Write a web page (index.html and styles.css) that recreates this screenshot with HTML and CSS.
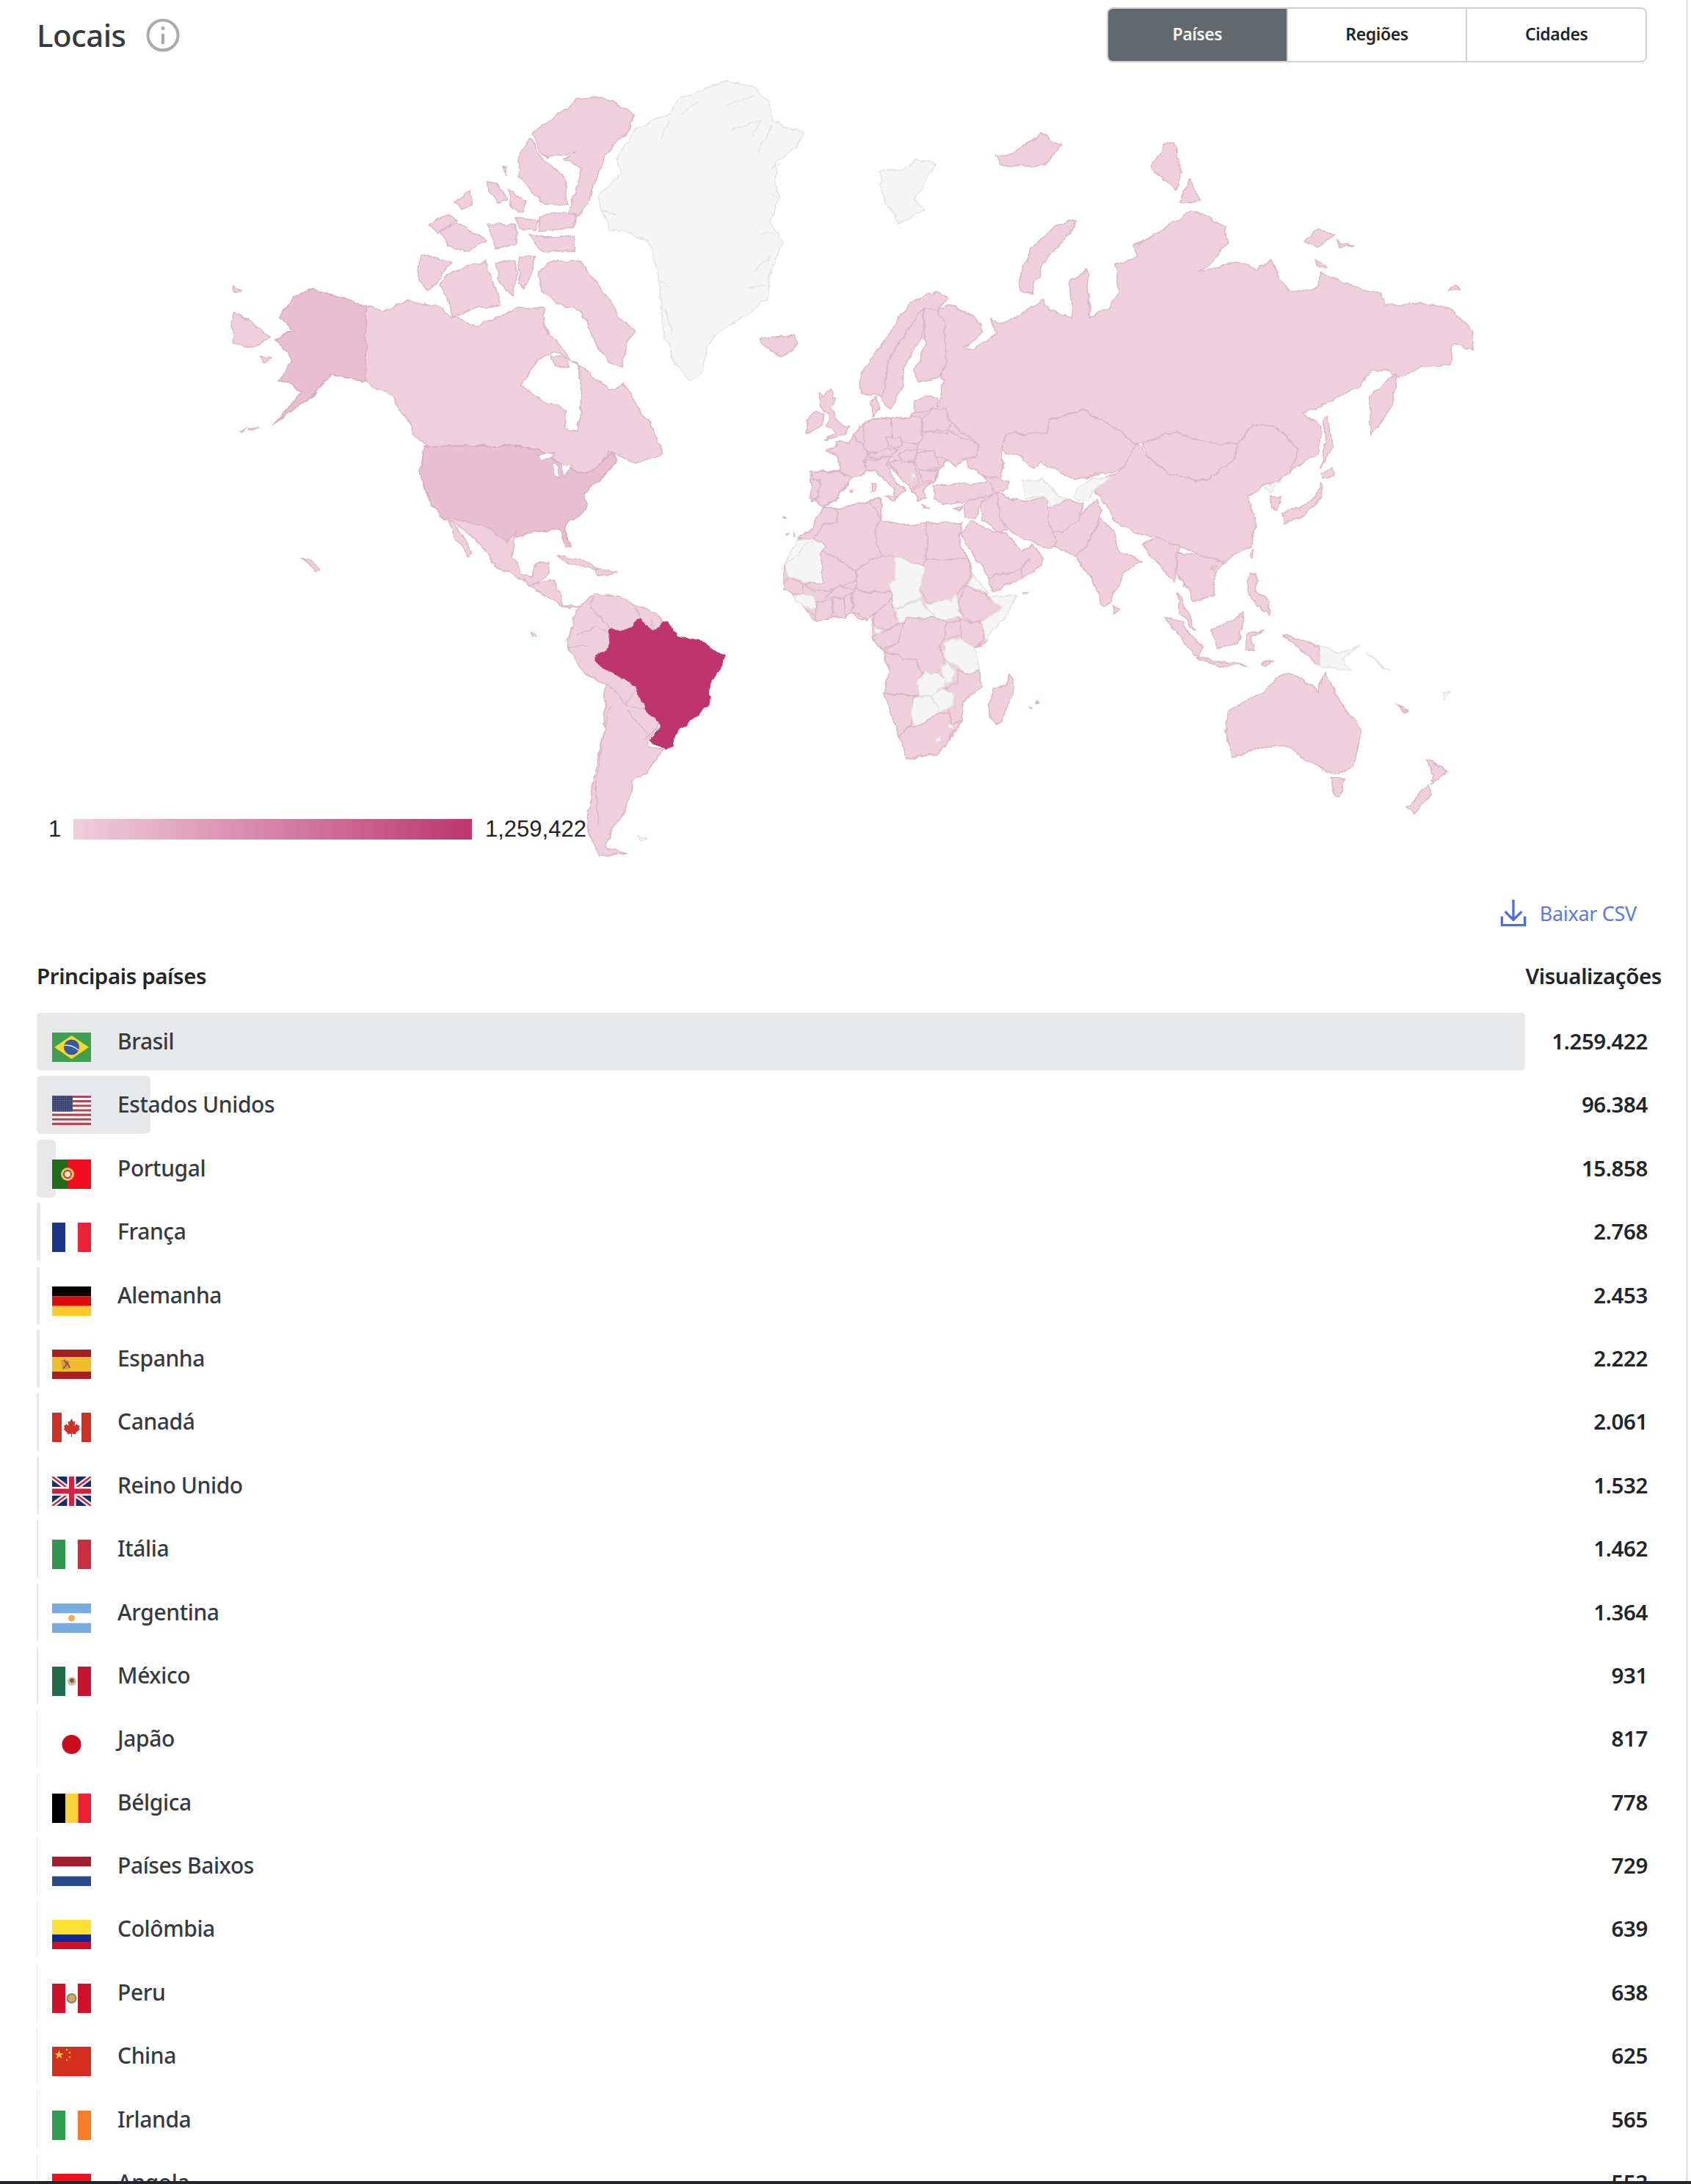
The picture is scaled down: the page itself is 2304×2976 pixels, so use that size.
FILE: index.html
```html
<!DOCTYPE html>
<html lang="pt-BR">
<head>
<meta charset="utf-8">
<title>Locais</title>
<link rel="stylesheet" href="styles.css">
</head>
<body>
<div class="screen">
<main class="page">
  <header class="head">
    <div class="title-group">
      <h1 class="title">Locais</h1>
      <svg class="info" viewBox="0 0 46 46"><circle cx="23" cy="23" r="20.5"/><path d="M23 21v14"/><circle class="dot" cx="23" cy="13.5" r="2.5"/></svg>
    </div>
    <div class="segments">
      <button class="seg seg-active">Países</button>
      <button class="seg">Regiões</button>
      <button class="seg">Cidades</button>
    </div>
  </header>

  <section class="map-wrap">
    <svg class="map" viewBox="50 100 2214 1100">
      <defs>
        <filter id="rough" x="0" y="0" width="100%" height="100%" filterUnits="objectBoundingBox" color-interpolation-filters="sRGB">
          <feTurbulence type="fractalNoise" baseFrequency=".06" numOctaves="3" seed="4" result="n"/>
          <feDisplacementMap in="SourceGraphic" in2="n" scale="9" xChannelSelector="R" yChannelSelector="G"/>
        </filter>
      </defs>
      <g filter="url(#rough)">
      <rect class="hit" x="50" y="100" width="2214" height="1100"/>
      <g transform="translate(280 90) scale(.574 .7015)">
        <path class="none" d="M1230 30L1300 40 1340 70 1345 105 1420 130 1400 160 1350 190 1360 250 1340 300 1370 345 1340 400 1335 450 1290 480 1210 520 1190 550 1175 600 1150 610 1115 580 1085 510 1080 450 1075 410 1050 340 1000 320 960 320 930 255 985 210 975 180 1020 120 1100 95 1130 60Z"/>
        <path class="fjord" d="M1250 125L1320 105 1300 135M1230 75L1300 60M1130 95L1170 70M1080 140L1100 105M975 290L940 280M1310 170L1345 115M1340 200L1365 190M1290 430L1330 425M1300 400L1340 370M1090 470L1110 520M1080 420L1100 430M1340 250L1365 255M1320 330L1360 320"/>
        <path class="land" d="M775 130L830 100 880 65 950 60 1020 95 1005 125 960 160 930 210 910 260 885 290 860 285 885 230 895 200 850 180 885 165 810 178 790 160Z"/>
        <path class="land" d="M740 180L770 140 800 180 850 215 860 270 800 265 745 215Z"/>
        <path class="land" d="M665 225L690 225 715 260 690 265ZM720 240L760 265 750 285 725 275ZM795 290L880 285 875 315 790 320ZM530 310L575 285 600 300 550 325ZM590 265L630 240 635 265 610 280ZM555 320L600 305 665 340 620 360 575 350ZM670 305L735 310 740 345 690 355ZM765 330L875 330 875 360 800 362ZM745 370L785 368 775 400 760 430 745 425ZM690 385L735 375 740 400 730 445 700 425ZM715 195L718 210 706 195ZM735 295L790 300 780 320 745 315Z"/>
        <path class="land" d="M510 365L585 380 550 420 525 435 503 410Z"/>
        <path class="land" d="M555 425L580 405 600 395 640 385 665 378 670 400 690 430 700 465 640 470 590 490 570 445Z"/>
        <path class="land" d="M790 400L815 378 890 380 920 410 950 440 985 490 1020 515 1000 545 990 585 960 575 925 540 905 495 890 475 860 470 840 460 800 440Z"/>
        <path class="land" d="M820 565L860 565 860 585 830 585ZM760 470L800 480 815 520 775 510Z"/>
        <path class="land" fill-rule="evenodd" d="M380 465L420 478 480 455 560 470 590 490 650 505 740 470 800 470 810 520 830 530 870 570 900 590 960 630 990 615 1040 680 1060 700 1085 755 1020 770 960 750 920 790 880 790 840 770 790 745 750 737 530 738 510 730 480 690 440 640 380 610ZM750 620L790 570 830 555 885 575 895 640 880 710 855 700 855 670 800 650Z"/>
        <path class="us" d="M380 465L320 450 255 432 205 450 175 490 210 515 165 530 205 570 175 610 230 630 180 680 160 695 240 650 300 600 335 605 380 612Z"/>
        <path class="land" d="M65 475L120 505 150 525 115 545 65 540ZM65 425L85 435 70 440ZM132 562L158 570 135 575ZM80 708L100 704 85 710ZM105 706L125 702 110 708Z"/>
        <path class="us" d="M510 790L520 738 750 737 790 745 850 775 880 790 920 785 965 750 975 770 930 810 900 830 905 860 865 885 850 900 870 935 855 935 840 900 780 905 730 915 715 925 680 900 620 885 560 875 530 845Z"/>
        <path class="white" d="M785 755L830 750 815 762 795 764ZM825 772L836 772 842 802 830 795ZM845 772L870 776 850 796Z"/>
        <path class="land" d="M560 875L620 885 680 900 715 925 735 905 730 950 750 985 775 995 785 965 815 965 815 985 790 1005 770 1010 740 990 690 975 640 920 600 890Z"/>
        <path class="land" d="M578 882L592 888 635 945 625 950 590 915Z"/>
        <path class="land" d="M770 1010L790 1005 830 1000 850 1050 885 1050 860 1055 820 1035Z"/>
        <path class="land" d="M835 950L880 955 935 975 900 975 860 965ZM925 975L980 985 930 990ZM230 955L255 965 270 975 260 980ZM775 1100L785 1108 775 1112Z"/>
        <path class="land" d="M860 1115L885 1050 925 1025 980 1030 1020 1045 1075 1065 1110 1105 1140 1160 1050 1320 1085 1330 1050 1370 1010 1390 1000 1440 960 1490 950 1520 1000 1530 935 1535 905 1480 915 1410 945 1290 950 1200 905 1185 860 1130Z"/>
        <path class="line" d="M885 1105L925 1090 955 1100M925 1030L915 1050 960 1095M1020 1050L1035 1085M1060 1075L1062 1095M1080 1070L1085 1085M950 1200L1000 1240 1020 1205M960 1240L945 1290 925 1400 935 1480M1000 1240L1045 1250 1080 1280 1040 1310M1000 1250L1050 1300M860 1130L905 1125"/>
        <path class="br" d="M922 1150L955 1130 960 1095 1000 1095 1030 1075 1060 1095 1098 1078 1115 1105 1180 1120 1233 1150 1200 1195 1195 1240 1170 1258 1125 1285 1110 1320 1090 1330 1060 1310 1080 1280 1045 1250 1020 1205 985 1185 950 1170 925 1160Z"/>
        <path class="none" d="M1025 1495L1050 1500 1035 1505Z"/>
        <path class="land" d="M1318 530L1350 525 1400 520 1405 540 1370 565 1340 555 1320 540Z"/>
      </g>

      <g transform="translate(1050 90) scale(.625 .7015)">
        <path class="land" d="M365 470L378 500 385 570 368 603 379 613 368 641 363 663 395 694 389 706 421 722 453 734 448 756 421 763 432 775 461 794 501 805 507 779 501 737 517 715 600 715 610 685 680 670 720 685 800 735 880 710 960 735 1020 735 1050 695 1100 700 1150 745 1130 790 1195 750 1200 700 1160 675 1280 625 1310 590 1350 590 1370 605 1420 585 1480 580 1490 540 1535 550 1530 515 1480 470 1410 460 1340 465 1330 440 1260 425 1200 400 1190 430 1130 440 1115 420 1090 380 1060 395 1020 380 935 400 960 385 995 345 990 310 920 280 860 315 790 350 800 370 750 385 760 440 735 470 695 490 690 395 650 420 660 490 610 475 595 455 550 480 510 500 480 490 490 520 445 550 420 545 460 520 460 500 400 465Z"/>
        <path class="land" d="M500 745L520 715 600 715 610 685 680 670 720 685 800 735 770 780 730 790 665 805 590 770 570 780 545 760Z"/>
        <path class="land" d="M810 735L880 710 960 735 1020 735 1010 760 970 795 930 805 870 790 830 765Z"/>
        <path class="land" d="M800 735L830 765 870 790 930 805 970 795 1010 760 1020 735 1050 695 1100 700 1150 745 1130 790 1090 810 1040 835 1058 890 1050 930 990 965 930 950 890 930 840 915 790 905 750 885 715 830 695 815 730 800 770 780Z"/>
        <path class="none" d="M1075 820L1115 800 1090 830Z"/>
        <path class="land" d="M1090 835L1110 840 1105 865 1090 860ZM1115 870L1190 840 1200 810 1205 835 1180 860 1120 890ZM1200 790L1225 780 1230 795 1205 800ZM1205 690L1215 680 1225 740 1200 780 1210 730Z"/>
        <path class="land" d="M1305 640L1365 595 1355 660 1310 720Z"/>
        <path class="land" d="M540 415L570 355 620 310 665 300 660 320 600 370 570 440 545 440ZM830 195L860 150 880 145 895 205 885 240 860 225ZM890 265L915 220 935 260ZM490 175L540 165 590 130 635 155 600 190 540 195 510 195ZM1165 340L1195 315 1230 330 1190 355ZM1235 340L1270 350 1240 350ZM1190 375L1215 390 1195 390ZM1475 435L1490 425 1503 435Z"/>
        <path class="none" d="M235 205L290 200 320 180 358 190 340 220 315 255 335 280 280 305 245 250Z"/>
        <path class="land" d="M195 600L250 530 300 465 360 435 385 455 365 470 330 470 300 510 255 575 250 610 245 640 200 635Z"/>
        <path class="land" d="M245 640L255 575 300 510 330 470 335 530 315 545 288 590 290 620 265 665 250 660Z"/>
        <path class="land" d="M330 470L365 470 378 500 385 570 365 605 320 615 313 590 340 540Z"/>
        <path class="land" d="M610 905L650 890 690 860 710 840 720 870 690 930 700 960 660 950 610 930Z"/>
        <path class="land" d="M690 930L720 875 750 905 760 945 810 960 770 985 740 1040 725 1050 700 995 665 955Z"/>
        <path class="land" d="M745 1045L760 1055 750 1065ZM810 930L840 915 890 930 885 960 880 1000 860 985 840 960ZM885 945L930 950 990 965 965 1000 965 1030 920 1040 900 1000 885 985ZM885 1020L910 1060 925 1095 895 1065ZM858 1068L895 1080 940 1130 935 1150 900 1120ZM930 1150L1035 1163 990 1165 935 1155ZM960 1095L1000 1080 1030 1060 1035 1075 1015 1120 975 1130ZM1035 1105L1075 1095 1050 1110 1055 1135 1035 1135ZM1045 985L1060 985 1060 1020 1085 1040 1090 1065 1060 1050 1040 1020ZM1045 950L1055 935 1050 960ZM960 975L975 968 970 982ZM1115 1105L1160 1115 1195 1125 1197 1165 1150 1130ZM1070 1160L1095 1155 1075 1168Z"/>
        <path class="none" d="M1197 1125L1240 1140 1285 1125 1270 1135 1245 1150 1270 1175 1197 1165ZM1300 1140L1350 1175 1330 1165ZM1465 1220L1485 1212 1470 1228Z"/>
        <path class="land" d="M1000 1250L1075 1215 1115 1180 1160 1190 1190 1215 1210 1175 1235 1230 1290 1290 1270 1360 1235 1378 1200 1365 1160 1345 1120 1320 1060 1325 1005 1345 990 1285Z"/>
        <path class="land" d="M1222 1385L1250 1385 1240 1420 1230 1418ZM1430 1345L1475 1370 1440 1395 1445 1380ZM1435 1395L1385 1440 1405 1450 1440 1415ZM1365 1240L1390 1252 1385 1255Z"/>
      </g>

      <g transform="translate(1080 480) scale(.33333)">
        <path class="land" d="M140 400L180 385 180 365 225 370 245 340 290 290 330 270 380 265 405 270 480 265 500 245 500 200 540 175 585 185 590 225 650 290 760 375 750 420 700 435 670 470 635 440 605 470 590 510 585 525 570 530 530 570 540 600 510 610 490 560 465 530 420 490 380 455 395 495 420 530 465 565 430 590 410 610 420 560 370 520 340 480 305 490 240 515 200 570 185 600 130 625 80 600 75 490 190 490 190 430Z"/>
        <path class="land" d="M535 270L570 225 625 230 650 290 630 330 535 325ZM500 200L540 175 585 185 590 225 570 225 500 245ZM530 325L640 315 700 350 760 375 750 420 700 435 670 470 635 440 590 430 575 400 510 400Z"/>
        <path class="land" d="M318 200L345 180 355 235 330 260Z"/>
        <path class="land" d="M105 165L125 180 160 150 165 190 180 190 155 230 205 300 230 305 220 335 130 360 175 330 140 300 150 260 120 235Z"/>
        <path class="land" d="M60 275L95 245 125 250 120 300 60 330Z"/>
        <path class="land" d="M140 400L180 385 180 365 225 370 245 340 300 375 315 400 290 440 305 490 240 515 190 490 190 430Z"/>
        <path class="land" d="M75 490L190 495 240 515 200 570 185 600 130 625 80 600 100 530Z"/>
        <path class="land" d="M80 520L115 520 100 600 75 605Z"/>
        <path class="land" d="M245 340L290 290 290 370 265 365Z"/>
        <path class="land" d="M290 300L330 270 400 270 405 330 385 400 310 410 290 370Z"/>
        <path class="land" d="M405 270L530 265 530 330 515 375 440 370 405 340Z"/>
        <path class="land" d="M380 350L440 345 450 380 420 390 385 380Z"/>
        <path class="land" d="M295 440L395 430 380 460 420 530 465 565 430 590 410 610 420 560 370 520 340 480 305 490Z"/>
        <path class="land" d="M300 420L385 395 430 395 400 430 310 430Z"/>
        <path class="land" d="M440 405L510 400 490 440 440 445 435 420Z"/>
        <path class="land" d="M510 410L580 400 600 470 520 485 495 445Z"/>
        <path class="land" d="M390 450L440 445 490 445 520 530 490 555 460 530Z"/>
        <path class="none" d="M480 495L500 500 490 520Z"/>
        <path class="land" d="M520 485L595 480 585 525 530 530Z"/>
        <path class="land" d="M490 560L570 530 530 570 540 600 510 610Z"/>
        <path class="land" d="M380 590L425 590 415 610ZM320 540L338 540 335 575 320 575ZM230 560L248 558 245 572ZM530 630L565 638 535 640ZM650 645L695 625 680 650ZM580 545L610 540 590 550Z"/>
        <path class="land" d="M570 545L810 530 825 600 700 610 620 625 575 590Z"/>
        <path class="land" d="M775 500L850 525 890 530 880 565 830 570 810 540Z"/>
        <path class="land" d="M700 620L820 575 775 610 750 680 705 680Z"/>
        <path class="land" d="M820 575L830 570 845 680 875 725 850 740 780 680 775 610Z"/>
        <path class="land" d="M830 570L885 600 950 610 1040 595 1045 690 1080 770 1060 800 990 780 950 770 880 720 845 680Z"/>
        <path class="land" d="M1040 640L1060 635 1115 605 1190 620 1160 690 1100 735 1060 730 1045 690Z"/>
        <path class="none" d="M935 520L1020 515 1090 590 1115 600 1060 635 1030 590 950 600Z"/>
      </g>

      <g transform="translate(1050 90) scale(.625 .7015)">
        <path class="none" d="M665 825L700 800 745 800 710 820 690 845 660 840Z"/>
      </g>

      <g transform="translate(1060 680) scale(.33333)">
        <path class="land" d="M80 160L30 260 25 345 60 395 110 445 160 495 225 490 300 465 345 490 385 480 385 565 430 625 455 700 430 795 470 900 495 965 525 1062 640 1045 720 950 755 895 750 830 830 770 825 700 805 615 845 575 975 395 865 400 850 395 800 310 775 245 740 160 750 95 610 100 540 110 420 80 420 0 375 10 230 40 190 30 130 130Z"/>
        <path class="land" d="M745 140L790 90 880 130 935 140 1000 215 1040 190 1090 240 1075 275 995 325 875 380 860 320 800 230Z"/>
        <path class="line" d="M860 320L990 290 1030 240M995 325L985 290"/>
        <path class="land" d="M80 160L130 130 190 30 245 50 240 90 180 110 145 165Z"/>
        <path class="none" d="M30 260L75 165 145 165 195 195 180 210 185 340 110 345 60 320 40 310Z"/>
        <path class="fjord" d="M35 255L85 235 100 190 145 175"/>
        <path class="land" d="M145 165L180 110 240 90 245 50 190 30 230 40 375 10 420 80 395 130 400 190 425 225 320 290 180 210 195 195Z"/>
        <path class="land" d="M375 10L420 0 420 80Z"/>
        <path class="land" d="M420 80L540 110 610 100 610 270 590 275 480 230 425 225 400 190 395 130Z"/>
        <path class="land" d="M610 100L750 95 740 160 775 245 610 245Z"/>
        <path class="land" d="M610 245L775 245 790 310 765 350 730 390 715 420 610 420 570 380 590 340 595 280Z"/>
        <path class="land" d="M320 290L425 225 480 230 480 320 455 375 370 380 320 365Z"/>
        <path class="none" d="M480 230L595 280 590 340 570 380 580 405 470 445 455 350 480 320Z"/>
        <path class="land" d="M180 210L320 290 320 330 270 350 205 375 150 380 105 350 185 340Z"/>
        <path class="land" d="M25 345L50 320 100 350 105 385 60 385 25 370Z"/>
        <path class="none" d="M60 395L105 385 150 400 155 445 110 440 85 425Z"/>
        <path class="land" d="M110 445L150 470 160 495 130 475Z"/>
        <path class="land" d="M155 420L220 410 225 490 160 495 150 450Z"/>
        <path class="land" d="M190 400L250 350 320 385 290 410 225 400Z"/>
        <path class="land" d="M225 405L270 405 275 480 225 490Z"/>
        <path class="land" d="M270 405L305 390 300 465 275 470Z"/>
        <path class="land" d="M315 365L370 380 455 375 465 400 400 465 360 495 340 470 300 465Z"/>
        <path class="land" d="M465 405L475 445 475 480 490 510 455 530 395 525 385 480 400 465Z"/>
        <path class="none" d="M475 450L580 410 640 485 525 495 490 510Z"/>
        <path class="none" d="M605 425L710 415 725 390 735 450 755 485 680 495 640 485Z"/>
        <path class="land" d="M770 350L850 395 880 425 920 440 860 490 810 505 755 485 730 430Z"/>
        <path class="none" d="M775 350L800 310 855 385Z"/>
        <path class="none" d="M865 400L975 395 940 470 845 575 835 505 920 440 880 425Z"/>
        <path class="land" d="M740 495L810 505 835 505 835 570 805 615 745 575Z"/>
        <path class="land" d="M690 505L740 505 745 560 675 570Z"/>
        <path class="land" d="M520 505L490 580 430 615 385 565 420 545 460 530 490 510Z"/>
        <path class="none" d="M395 525L420 530 415 545 400 545Z"/>
        <path class="land" d="M525 495L640 485 690 505 675 570 665 610 680 660 650 715 585 710 565 655 530 650 505 660 490 635 435 625 490 580 515 510Z"/>
        <path class="none" d="M680 590L710 575 745 575 805 615 825 695 765 715 735 690 680 650Z"/>
        <path class="land" d="M435 630L490 635 505 660 530 650 565 655 590 710 570 740 570 800 430 795 455 700Z"/>
        <path class="land" d="M735 700L765 715 825 700 830 770 750 830 755 895 710 925 700 870 720 790 680 770 735 750Z"/>
        <path class="none" d="M570 740L600 710 650 715 680 735 680 765 640 800 585 800 570 785Z"/>
        <path class="none" d="M660 680L695 670 725 710 710 750 685 750Z"/>
        <path class="land" d="M430 795L575 805 550 810 550 870 545 930 495 965 470 900Z"/>
        <path class="none" d="M555 815L615 805 660 865 600 915 560 935 545 880Z"/>
        <path class="none" d="M620 805L680 775 720 790 715 840 690 865 660 865Z"/>
        <path class="land" d="M495 965L545 935 600 915 660 870 700 880 700 925 720 950 690 1005 640 1045 525 1062 510 1020Z"/>
        <path class="none" d="M640 980L665 970 665 990 650 995ZM695 930L715 925 715 940 700 940Z"/>
        <path class="land" d="M945 715L965 770 930 860 915 910 885 918 860 870 880 780 925 760Z"/>
        <path class="land" d="M20 75L35 80 25 82ZM30 150L45 145 35 155ZM65 140L75 150 65 155ZM1000 378L1020 380 1005 384ZM1030 845L1040 855 1030 855ZM1055 830L1065 838 1055 840Z"/>
      </g>
      </g>
    </svg>
    <div class="legend">
      <span class="legend-min">1</span>
      <span class="legend-bar"></span>
      <span class="legend-max">1,259,422</span>
    </div>
  </section>

  <div class="csv-row">
    <a class="csv" href="#">
      <svg class="csv-icon" viewBox="0 0 38 40"><path d="M19 1v28M7 18l12 12 12-12"/><path class="tray" d="M2.500 25v12.500h33V25"/></svg>
      Baixar CSV
    </a>
  </div>

  <div class="table-head">
    <span>Principais países</span>
    <span>Visualizações</span>
  </div>

  <div class="rows">
    <div class="row">
      <div class="track"><span class="bar" style="width:2028px"></span>
        <svg class="flag" viewBox="0 0 53 40"><rect width="53" height="40" fill="#3f9e4f"/><path d="M26.500 4L50 20 26.500 36 3 20Z" fill="#f6d92b"/><circle cx="26.500" cy="20" r="10.500" fill="#3a58a8"/><path d="M16.500 17.500Q27 16 36 24" stroke="#e8e8f0" stroke-width="1.500" fill="none"/></svg>
        <span class="name">Brasil</span></div>
      <span class="val">1.259.422</span>
    </div>
    <div class="row">
      <div class="track"><span class="bar" style="width:155px"></span>
        <svg class="flag" viewBox="0 0 53 40"><defs><pattern id="stars" width="2.600" height="2.600" patternUnits="userSpaceOnUse"><rect width="2.600" height="2.600" fill="#36426f"/><circle cx="1.300" cy="1.300" r=".55" fill="#8089ad"/></pattern></defs><rect width="53" height="40" fill="#fff"/><path d="M0 1.500h53M0 7.600h53M0 13.800h53M0 20h53M0 26.100h53M0 32.300h53M0 38.400h53" stroke="#b84453" stroke-width="3.080"/><rect width="28" height="21.500" fill="url(#stars)"/></svg>
        <span class="name">Estados Unidos</span></div>
      <span class="val">96.384</span>
    </div>
    <div class="row">
      <div class="track"><span class="bar" style="width:25.500px"></span>
        <svg class="flag" viewBox="0 0 53 40"><rect width="53" height="40" fill="#f00d1e"/><rect width="21" height="40" fill="#1f6a1c"/><circle cx="21" cy="20" r="9" fill="#e8c463"/><circle cx="21" cy="20" r="5" fill="#e6e3d8" stroke="#c8352a" stroke-width="2"/></svg>
        <span class="name">Portugal</span></div>
      <span class="val">15.858</span>
    </div>
    <div class="row">
      <div class="track"><span class="bar" style="width:4.500px"></span>
        <svg class="flag" viewBox="0 0 53 40"><rect width="18" height="40" fill="#1b3588"/><rect x="35" width="18" height="40" fill="#ec2239"/></svg>
        <span class="name">França</span></div>
      <span class="val">2.768</span>
    </div>
    <div class="row">
      <div class="track"><span class="bar" style="width:4px"></span>
        <svg class="flag" viewBox="0 0 53 40"><rect width="53" height="13.300" fill="#000"/><rect y="13.300" width="53" height="13.400" fill="#d90b0f"/><rect y="26.700" width="53" height="13.300" fill="#fdc72e"/></svg>
        <span class="name">Alemanha</span></div>
      <span class="val">2.453</span>
    </div>
    <div class="row">
      <div class="track"><span class="bar" style="width:3.600px"></span>
        <svg class="flag" viewBox="0 0 53 40"><rect width="53" height="40" fill="#a91c21"/><rect y="10" width="53" height="20" fill="#f0bd2f"/><path d="M12 15L18 13 24 16 22 27 14 27Z" fill="#d0a258"/><path d="M16 14L20 20 15 26M20 16L24 25" stroke="#a9503a" stroke-width="2" fill="none"/></svg>
        <span class="name">Espanha</span></div>
      <span class="val">2.222</span>
    </div>
    <div class="row">
      <div class="track"><span class="bar" style="width:3.300px"></span>
        <svg class="flag" viewBox="0 0 53 40"><rect width="13" height="40" fill="#cf3025"/><rect x="40" width="13" height="40" fill="#cf3025"/><path d="M26.500 8L29 12.500 31.500 11.500 30.500 18 34 15 35 17.500 37.500 17 36.500 21.500 38 22.500 32 27.500 33 29.500 27 28.500V33H26V28.500L20 29.500 21 27.500 15.500 22.500 17 21.500 16 17 18 17.500 19 15 22.500 18 21.500 11.500 24 12.500Z" fill="#cf3025"/></svg>
        <span class="name">Canadá</span></div>
      <span class="val">2.061</span>
    </div>
    <div class="row">
      <div class="track"><span class="bar" style="width:2.500px"></span>
        <svg class="flag" viewBox="0 0 53 40"><rect width="53" height="40" fill="#1c2e6a"/><path d="M0 0L53 40M53 0L0 40" stroke="#fff" stroke-width="7"/><path d="M0 0L53 40M53 0L0 40" stroke="#cf2240" stroke-width="2.500"/><path d="M26.500 0V40M0 20H53" stroke="#fff" stroke-width="12"/><path d="M26.500 0V40M0 20H53" stroke="#cf2240" stroke-width="7"/></svg>
        <span class="name">Reino Unido</span></div>
      <span class="val">1.532</span>
    </div>
    <div class="row">
      <div class="track"><span class="bar" style="width:2.400px"></span>
        <svg class="flag" viewBox="0 0 53 40"><rect width="18" height="40" fill="#31954f"/><rect x="35" width="18" height="40" fill="#c62f3f"/></svg>
        <span class="name">Itália</span></div>
      <span class="val">1.462</span>
    </div>
    <div class="row">
      <div class="track"><span class="bar" style="width:2.200px"></span>
        <svg class="flag" viewBox="0 0 53 40"><rect width="53" height="13.300" fill="#78ace0"/><rect y="26.700" width="53" height="13.300" fill="#78ace0"/><circle cx="26.500" cy="20" r="4.500" fill="#eeb04e"/></svg>
        <span class="name">Argentina</span></div>
      <span class="val">1.364</span>
    </div>
    <div class="row">
      <div class="track"><span class="bar" style="width:1.500px"></span>
        <svg class="flag" viewBox="0 0 53 40"><rect width="18" height="40" fill="#1f6b4a"/><rect x="35" width="18" height="40" fill="#c5142f"/><circle cx="27" cy="20" r="6" fill="#c9c0a8"/><circle cx="27" cy="19" r="3" fill="#8a5a3a"/></svg>
        <span class="name">México</span></div>
      <span class="val">931</span>
    </div>
    <div class="row">
      <div class="track"><span class="bar" style="width:1.300px"></span>
        <svg class="flag" viewBox="0 0 53 40"><circle cx="26.500" cy="20" r="13" fill="#cb0a1e"/></svg>
        <span class="name">Japão</span></div>
      <span class="val">817</span>
    </div>
    <div class="row">
      <div class="track"><span class="bar" style="width:1.300px"></span>
        <svg class="flag" viewBox="0 0 53 40"><rect width="18" height="40" fill="#000"/><rect x="18" width="17.500" height="40" fill="#fdd33b"/><rect x="35.500" width="17.500" height="40" fill="#ea2138"/></svg>
        <span class="name">Bélgica</span></div>
      <span class="val">778</span>
    </div>
    <div class="row">
      <div class="track"><span class="bar" style="width:1.200px"></span>
        <svg class="flag" viewBox="0 0 53 40"><rect width="53" height="13.300" fill="#a31f2e"/><rect y="26.700" width="53" height="13.300" fill="#2a4a8c"/></svg>
        <span class="name">Países Baixos</span></div>
      <span class="val">729</span>
    </div>
    <div class="row">
      <div class="track"><span class="bar" style="width:1px"></span>
        <svg class="flag" viewBox="0 0 53 40"><rect width="53" height="20" fill="#fde034"/><rect y="20" width="53" height="10" fill="#0f2b8c"/><rect y="30" width="53" height="10" fill="#cf1128"/></svg>
        <span class="name">Colômbia</span></div>
      <span class="val">639</span>
    </div>
    <div class="row">
      <div class="track"><span class="bar" style="width:1px"></span>
        <svg class="flag" viewBox="0 0 53 40"><rect width="18" height="40" fill="#cf1229"/><rect x="35" width="18" height="40" fill="#cf1229"/><circle cx="26.500" cy="20" r="6" fill="#eea058" stroke="#4e9e6c" stroke-width="2"/></svg>
        <span class="name">Peru</span></div>
      <span class="val">638</span>
    </div>
    <div class="row">
      <div class="track"><span class="bar" style="width:1px"></span>
        <svg class="flag" viewBox="0 0 53 40"><rect width="53" height="40" fill="#d32e1e"/><path d="M9.500 4.500L11 9H15.500L12 11.800 13.400 16.200 9.500 13.500 5.600 16.200 7 11.800 3.500 9H8Z" fill="#fc3"/><circle cx="20" cy="4" r="1.300" fill="#fc3"/><circle cx="24" cy="8" r="1.300" fill="#fc3"/><circle cx="24" cy="14" r="1.300" fill="#fc3"/><circle cx="20" cy="18" r="1.300" fill="#fc3"/></svg>
        <span class="name">China</span></div>
      <span class="val">625</span>
    </div>
    <div class="row">
      <div class="track"><span class="bar" style="width:1px"></span>
        <svg class="flag" viewBox="0 0 53 40"><rect width="18" height="40" fill="#319b50"/><rect x="35" width="18" height="40" fill="#f97e2a"/></svg>
        <span class="name">Irlanda</span></div>
      <span class="val">565</span>
    </div>
    <div class="row">
      <div class="track"><span class="bar" style="width:1px"></span>
        <svg class="flag" viewBox="0 0 53 40"><rect width="53" height="20" fill="#f0121e"/><rect y="20" width="53" height="20" fill="#111"/></svg>
        <span class="name">Angola</span></div>
      <span class="val">553</span>
    </div>
  </div>
</main>
<div class="bottom-edge"></div>
</div>
</body>
</html>
```
FILE: styles.css
```css
* { box-sizing: border-box; }
html, body { margin: 0; padding: 0; background: #fff; }
body { font-family: "Noto Sans", "Open Sans", sans-serif; color: #212529; }

.screen {
  width: 2304px;
  height: 2976px;
  display: flex;
  flex-direction: column;
  overflow: hidden;
}
.page {
  flex: 1;
  width: 2300px;
  min-height: 0;
  overflow: hidden;
  padding: 0 33px 0 50px;
  border-right: 3px solid #e6e6e6;
}
.bottom-edge { height: 4px; background: #23262a; flex: none; }

.head {
  height: 100px;
  padding-top: 10px;
  display: flex;
  justify-content: space-between;
  align-items: flex-start;
}
.title-group { height: 75px; display: flex; align-items: center; gap: 27px; }
.title { margin: 0; font-size: 42px; line-height: 1; font-weight: 500; color: #343a40; letter-spacing: -.5px; }
.info { width: 46px; height: 46px; }
.info circle { fill: none; stroke: #a8aaad; stroke-width: 4; }
.info path { stroke: #a8aaad; stroke-width: 4; fill: none; }
.info .dot { fill: #a8aaad; stroke: none; }

.segments {
  display: flex;
  margin-right: 20px;
  width: 736px;
  height: 75px;
  border: 2px solid #cfd0d2;
  border-radius: 8px;
  overflow: hidden;
}
.seg {
  flex: 1 1 0;
  border: 0;
  border-left: 2px solid #cfd0d2;
  background: #fff;
  color: #212529;
  font: 600 23px "Noto Sans", sans-serif;
  letter-spacing: -.4px;
  padding: 0 0 4px;
}
.seg-active { background: #63686d; color: #f4f4f4; border-left: 0; }

.map-wrap { position: relative; height: 1100px; }
.map { display: block; width: 2214px; height: 1100px; }
.map path { vector-effect: non-scaling-stroke; stroke-width: 1.5; stroke-linejoin: round; }
.hit { fill: #fff; }
.land { fill: #eecfdb; stroke: #dcb5c6; }
.us { fill: #e8bfd0; stroke: #d6a9bd; }
.br { fill: #be356e; stroke: #be356e; }
.none { fill: #f5f5f5; stroke: #e3e3e3; }
.white { fill: #fff; stroke: #dcb5c6; }
.line { fill: none; stroke: #dcb5c6; }
.fjord { fill: none; stroke: #e3e3e3; }

.legend {
  position: absolute;
  left: 16px;
  top: 1016px;
  height: 28px;
  display: flex;
  align-items: center;
  font: 31px/28px "Liberation Sans", Arial, sans-serif;
  color: #222;
}
.legend-min { width: 34px; }
.legend-bar { width: 543px; height: 28px; margin-right: 18px; background: linear-gradient(90deg, #efcfdb, #bc3670); }
.legend-max { width: 140px; }

.csv-row { height: 90px; display: flex; justify-content: flex-end; padding-right: 34px; padding-top: 23px; }
.csv { display: flex; align-items: center; gap: 18px; height: 42px; color: #5b78e4; font-size: 27px; text-decoration: none; letter-spacing: -.3px; }
.csv-icon { width: 36px; height: 40px; }
.csv-icon path { fill: none; stroke: #4f6ce8; stroke-width: 3.500; }

.table-head {
  height: 90px;
  padding-top: 20px;
  display: flex;
  justify-content: space-between;
  font-size: 29.500px;
  line-height: 40px;
  font-weight: 600;
  color: #212529;
  letter-spacing: -.4px;
}

.rows { display: flex; flex-direction: column; gap: 7.400px; }
.row { display: flex; height: 79px; flex: none; }
.track {
  position: relative;
  flex: 1;
  display: flex;
  align-items: flex-start;
  padding-left: 21px;
}
.bar { position: absolute; left: 0; top: 0; height: 79px; background: #e7e8ea; border-radius: 6px; }
.flag { position: relative; width: 53px; height: 40px; margin-top: 27px; flex: none; }
.name { position: relative; margin-left: 36px; font-size: 30px; line-height: 77px; font-weight: 500; color: #343a40; letter-spacing: -.4px; }
.val {
  width: 186px;
  padding-right: 19px;
  text-align: right;
  font-size: 29.500px;
  line-height: 77px;
  font-weight: 600;
  color: #212529;
  letter-spacing: -.4px;
}
```
